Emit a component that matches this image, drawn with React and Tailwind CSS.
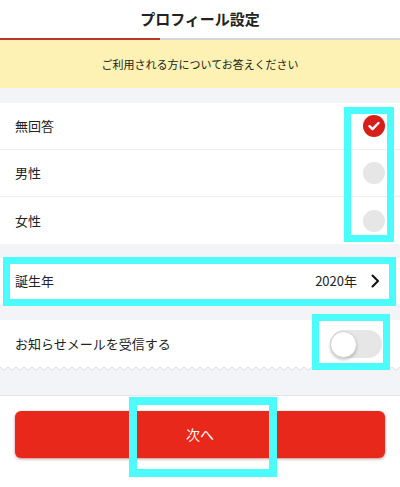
import React, { useState } from 'react'

const font = { fontFamily: '"Noto Sans CJK JP", "Noto Sans", sans-serif' }

function Radio({ checked }) {
  if (checked) {
    return (
      <svg width="22" height="22" viewBox="0 0 22 22">
        <circle cx="11" cy="11" r="11" fill="#d61f1a" />
        <path d="M6.5 11.2l3 3 6-6.2" fill="none" stroke="#fff" strokeWidth="2.4" strokeLinecap="round" strokeLinejoin="round" />
      </svg>
    )
  }
  return <div className="w-[22px] h-[22px] rounded-full bg-[#e6e6e6]" />
}

function Zigzag() {
  return (
    <svg className="block w-full h-[5px]" preserveAspectRatio="none">
      <defs>
        <pattern id="zz" width="8" height="5" patternUnits="userSpaceOnUse">
          <rect width="8" height="5" fill="#f2f4f7" />
          <path d="M0 0H8V1L4 4L0 1Z" fill="#fff" />
          <path d="M0 1L4 4L8 1" fill="none" stroke="#d5d8dd" strokeWidth="0.8" />
        </pattern>
      </defs>
      <rect width="100%" height="5" fill="url(#zz)" />
    </svg>
  )
}

export default function App() {
  const [gender, setGender] = useState('none')
  const [notify, setNotify] = useState(false)

  const options = [
    { key: 'none', label: '無回答' },
    { key: 'male', label: '男性' },
    { key: 'female', label: '女性' },
  ]

  return (
    <div className="relative w-full h-[487px] bg-white text-[#222] overflow-hidden" style={font}>
      <div className="h-[38px] flex items-center justify-center text-[15px] font-bold">
        プロフィール設定
      </div>
      <div className="h-[2px] flex">
        <div className="w-[160px] bg-[#bd3626]" />
        <div className="flex-1 bg-[#d6d6d6]" />
      </div>
      <div className="h-[48px] bg-[#fdf2b3] flex items-center justify-center text-[11px]">
        ご利用される方についてお答えください
      </div>

      <div className="bg-[#f2f4f7]">
        <div className="h-[15px]" />
        <div className="bg-white">
          {options.map((o, i) => (
            <div
              key={o.key}
              onClick={() => setGender(o.key)}
              className={`h-[47px] flex items-center justify-between pl-[15px] pr-[15px] text-[13px] ${
                i < 2 ? 'border-b border-[#eceef2]' : ''
              }`}
            >
              <span>{o.label}</span>
              <Radio checked={gender === o.key} />
            </div>
          ))}
        </div>

        <div className="h-[13px]" />
        <div className="h-[47px] bg-white flex items-center justify-between pl-[15px] pr-[20px] text-[13px]">
          <span>誕生年</span>
          <div className="flex items-center gap-[14px]">
            <span>2020年</span>
            <svg width="9" height="14" viewBox="0 0 9 14">
              <path d="M1.5 1.5L7 7L1.5 12.5" fill="none" stroke="#111" strokeWidth="2" strokeLinecap="round" strokeLinejoin="round" />
            </svg>
          </div>
        </div>

        <div className="h-[16px]" />
        <div className="h-[46px] pt-[2px] bg-white flex items-center justify-between pl-[15px] pr-[18px] text-[13px]">
          <span>お知らせメールを受信する</span>
          <button
            onClick={() => setNotify(!notify)}
            className={`relative w-[52px] h-[28px] rounded-full ${notify ? 'bg-[#e8281a]' : 'bg-[#e6e6e6]'}`}
          >
            <span
              className={`absolute top-[0.5px] w-[27px] h-[27px] rounded-full bg-white border border-[#d0d0d0] shadow-[0_2px_3px_rgba(0,0,0,0.2)] ${
                notify ? 'left-[25px]' : 'left-0'
              }`}
            />
          </button>
        </div>
        <Zigzag />
        <div className="h-[25px] border-b border-[#e3e5ea]" />
      </div>

      <div className="px-[15px] pt-[15px]">
        <button className="w-full h-[47px] rounded-[6px] bg-[#e8281a] text-white text-[14px] shadow-[0_1px_3px_rgba(120,0,0,0.45)]">
          次へ
        </button>
      </div>

      {/* annotation boxes */}
      <div className="absolute left-[344px] top-[107px] w-[50px] h-[135px] border-[7px] border-[#4cfbfb]" />
      <div className="absolute left-[3px] top-[257px] w-[393px] h-[49px] border-[7px] border-[#4cfbfb]" />
      <div className="absolute left-[312px] top-[314px] w-[78px] h-[56px] border-[7px] border-[#4cfbfb]" />
      <div className="absolute left-[129px] top-[397px] w-[148px] h-[80px] border-[8px] border-[#4cfbfb]" />
    </div>
  )
}
